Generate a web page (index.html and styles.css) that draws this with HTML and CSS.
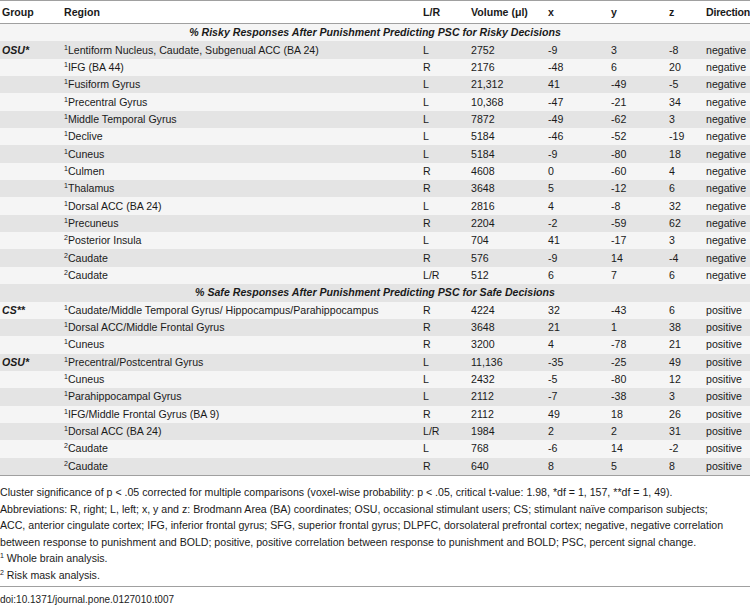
FILE: index.html
```html
<!DOCTYPE html>
<html>
<head>
<meta charset="utf-8">
<link rel="stylesheet" href="styles.css">
</head>
<body>
<table class="tbl">
<colgroup>
<col class="c-group"><col class="c-region"><col class="c-lr"><col class="c-vol"><col class="c-x"><col class="c-y"><col class="c-z"><col class="c-dir">
</colgroup>
<thead>
<tr><th>Group</th><th>Region</th><th>L/R</th><th>Volume (μl)</th><th>x</th><th>y</th><th>z</th><th class="h-dir">Direction</th></tr>
</thead>
<tbody>
<tr class="sec"><td colspan="8">% Risky Responses After Punishment Predicting PSC for Risky Decisions</td></tr>
<tr><td class="grp">OSU*</td><td><sup>1</sup>Lentiform Nucleus, Caudate, Subgenual ACC (BA 24)</td><td>L</td><td>2752</td><td>-9</td><td>3</td><td>-8</td><td>negative</td></tr>
<tr><td></td><td><sup>1</sup>IFG (BA 44)</td><td>R</td><td>2176</td><td>-48</td><td>6</td><td>20</td><td>negative</td></tr>
<tr><td></td><td><sup>1</sup>Fusiform Gyrus</td><td>L</td><td>21,312</td><td>41</td><td>-49</td><td>-5</td><td>negative</td></tr>
<tr><td></td><td><sup>1</sup>Precentral Gyrus</td><td>L</td><td>10,368</td><td>-47</td><td>-21</td><td>34</td><td>negative</td></tr>
<tr><td></td><td><sup>1</sup>Middle Temporal Gyrus</td><td>L</td><td>7872</td><td>-49</td><td>-62</td><td>3</td><td>negative</td></tr>
<tr><td></td><td><sup>1</sup>Declive</td><td>L</td><td>5184</td><td>-46</td><td>-52</td><td>-19</td><td>negative</td></tr>
<tr><td></td><td><sup>1</sup>Cuneus</td><td>L</td><td>5184</td><td>-9</td><td>-80</td><td>18</td><td>negative</td></tr>
<tr><td></td><td><sup>1</sup>Culmen</td><td>R</td><td>4608</td><td>0</td><td>-60</td><td>4</td><td>negative</td></tr>
<tr><td></td><td><sup>1</sup>Thalamus</td><td>R</td><td>3648</td><td>5</td><td>-12</td><td>6</td><td>negative</td></tr>
<tr><td></td><td><sup>1</sup>Dorsal ACC (BA 24)</td><td>L</td><td>2816</td><td>4</td><td>-8</td><td>32</td><td>negative</td></tr>
<tr><td></td><td><sup>1</sup>Precuneus</td><td>R</td><td>2204</td><td>-2</td><td>-59</td><td>62</td><td>negative</td></tr>
<tr><td></td><td><sup>2</sup>Posterior Insula</td><td>L</td><td>704</td><td>41</td><td>-17</td><td>3</td><td>negative</td></tr>
<tr><td></td><td><sup>2</sup>Caudate</td><td>R</td><td>576</td><td>-9</td><td>14</td><td>-4</td><td>negative</td></tr>
<tr><td></td><td><sup>2</sup>Caudate</td><td>L/R</td><td>512</td><td>6</td><td>7</td><td>6</td><td>negative</td></tr>
<tr class="sec"><td colspan="8">% Safe Responses After Punishment Predicting PSC for Safe Decisions</td></tr>
<tr><td class="grp">CS**</td><td><sup>1</sup>Caudate/Middle Temporal Gyrus/ Hippocampus/Parahippocampus</td><td>R</td><td>4224</td><td>32</td><td>-43</td><td>6</td><td>positive</td></tr>
<tr><td></td><td><sup>1</sup>Dorsal ACC/Middle Frontal Gyrus</td><td>R</td><td>3648</td><td>21</td><td>1</td><td>38</td><td>positive</td></tr>
<tr><td></td><td><sup>1</sup>Cuneus</td><td>R</td><td>3200</td><td>4</td><td>-78</td><td>21</td><td>positive</td></tr>
<tr><td class="grp">OSU*</td><td><sup>1</sup>Precentral/Postcentral Gyrus</td><td>L</td><td>11,136</td><td>-35</td><td>-25</td><td>49</td><td>positive</td></tr>
<tr><td></td><td><sup>1</sup>Cuneus</td><td>L</td><td>2432</td><td>-5</td><td>-80</td><td>12</td><td>positive</td></tr>
<tr><td></td><td><sup>1</sup>Parahippocampal Gyrus</td><td>L</td><td>2112</td><td>-7</td><td>-38</td><td>3</td><td>positive</td></tr>
<tr><td></td><td><sup>1</sup>IFG/Middle Frontal Gyrus (BA 9)</td><td>R</td><td>2112</td><td>49</td><td>18</td><td>26</td><td>positive</td></tr>
<tr><td></td><td><sup>1</sup>Dorsal ACC (BA 24)</td><td>L/R</td><td>1984</td><td>2</td><td>2</td><td>31</td><td>positive</td></tr>
<tr><td></td><td><sup>2</sup>Caudate</td><td>L</td><td>768</td><td>-6</td><td>14</td><td>-2</td><td>positive</td></tr>
<tr><td></td><td><sup>2</sup>Caudate</td><td>R</td><td>640</td><td>8</td><td>5</td><td>8</td><td>positive</td></tr>
</tbody>
</table>
<div class="notes">
<p>Cluster significance of p &lt; .05 corrected for multiple comparisons (voxel-wise probability: p &lt; .05, critical t-value: 1.98, *df = 1, 157, **df = 1, 49).</p>
<p class="wrap">Abbreviations: R, right; L, left; x, y and z: Brodmann Area (BA) coordinates; OSU, occasional stimulant users; CS; stimulant naïve comparison subjects; ACC, anterior cingulate cortex; IFG, inferior frontal gyrus; SFG, superior frontal gyrus; DLPFC, dorsolateral prefrontal cortex; negative, negative correlation between response to punishment and BOLD; positive, positive correlation between response to punishment and BOLD; PSC, percent signal change.</p>
<p><sup>1</sup> Whole brain analysis.</p>
<p><sup>2</sup> Risk mask analysis.</p>
</div>
<div class="doi">doi:10.1371/journal.pone.0127010.t007</div>
</body>
</html>
```
FILE: styles.css
```css
html, body {
  margin: 0;
  padding: 0;
  background: #fff;
}
body {
  font-family: "Liberation Sans", Arial, sans-serif;
  color: #1a1a1a;
  font-size: 10.6px;
  width: 750px;
}
.tbl {
  width: 750px;
  border-collapse: collapse;
  table-layout: fixed;
  border-top: 1px solid #a0a0a0;
  border-bottom: 1px solid #a0a0a0;
}
.c-group { width: 62px; }
.c-region { width: 359px; }
.c-lr { width: 48px; }
.c-vol { width: 77px; }
.c-x { width: 63px; }
.c-y { width: 58px; }
.c-z { width: 37px; }
.c-dir { width: 46px; }
.tbl th {
  text-align: left;
  font-weight: bold;
  height: 22px;
  padding: 0 0 0 2px;
  white-space: nowrap;
  border-bottom: 1px solid #a0a0a0;
  background: #fff;
}
.tbl th.h-dir {
  letter-spacing: -0.2px;
}
.tbl td {
  height: 17.35px;
  padding: 0 0 0 2px;
  white-space: nowrap;
  line-height: 13px;
}
.tbl tbody tr:nth-child(odd) { background: #f5f5f5; }
.tbl tbody tr:nth-child(even) { background: #e4e4e4; }
.tbl tr.sec td {
  text-align: center;
  font-weight: bold;
  font-style: italic;
  padding: 0;
}
.tbl td.grp {
  font-weight: bold;
  font-style: italic;
}
sup {
  font-size: 7px;
  line-height: 0;
  vertical-align: 4px;
}
.notes {
  padding-top: 8px;
  padding-bottom: 2px;
  border-bottom: 1px solid #a0a0a0;
}
.notes p {
  margin: 0;
  line-height: 16.6px;
}
.notes p.wrap {
  max-width: 735px;
}
.doi {
  font-size: 10px;
  line-height: 16px;
  padding-top: 5px;
  color: #222;
}
```
